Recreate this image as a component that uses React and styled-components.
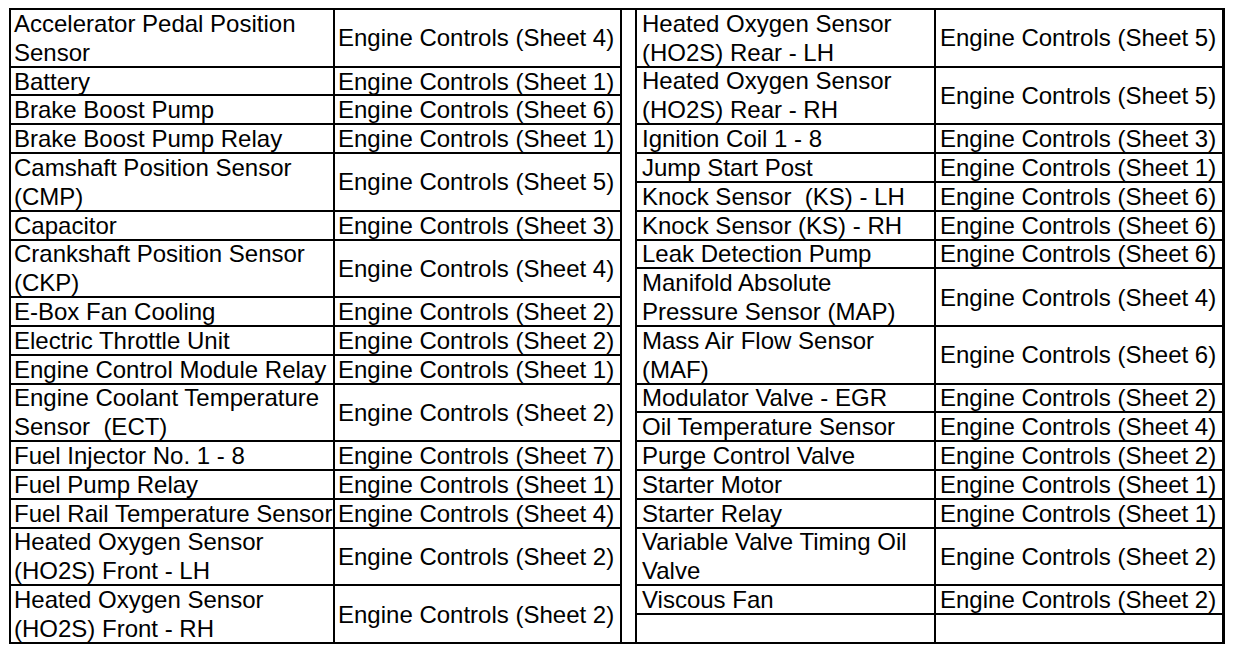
import React from 'react';
import styled, { createGlobalStyle } from 'styled-components';

const UNIT = 28.82;

const GlobalStyle = createGlobalStyle`
  html, body {
    margin: 0;
    padding: 0;
    background: #fff;
  }
  body {
    font-family: "Liberation Sans", Arial, sans-serif;
    color: #000;
  }
`;

const Frame = styled.div`
  display: flex;
  width: fit-content;
  margin: 8px 0 0 9px;
  border: 2px solid #000;
  border-right-width: 3px;
  background: #fff;
`;

const Side = styled.div`
  display: flex;
  flex-direction: column;
  border-left: ${(p) => (p.$right ? '2px solid #000' : 'none')};
  border-right: ${(p) => (p.$right ? 'none' : '2px solid #000')};
`;

const Spacer = styled.div`
  width: 13px;
`;

const Row = styled.div`
  display: grid;
  grid-template-columns: ${(p) => (p.$right ? '299px 286px' : '324px 285px')};
  grid-template-rows: minmax(0, 1fr);
  box-sizing: border-box;
  height: ${(p) => p.$units * UNIT}px;
  border-bottom: 2px solid #000;

  &:last-child {
    border-bottom: none;
    height: ${(p) => p.$units * UNIT - 2}px;
  }
`;

const Cell = styled.div`
  display: flex;
  flex-direction: column;
  justify-content: center;
  min-height: 0;
  box-sizing: border-box;
  padding-left: ${(p) => p.$pad}px;
  border-right: ${(p) => (p.$divider ? '2px solid #000' : 'none')};
  font-size: 24px;
  line-height: 29px;
  white-space: pre;
`;

const Line = styled.span`
  display: block;
  flex-shrink: 0;
`;

const left = [
  [['Accelerator Pedal Position', 'Sensor'], 4],
  [['Battery'], 1],
  [['Brake Boost Pump'], 6],
  [['Brake Boost Pump Relay'], 1],
  [['Camshaft Position Sensor', '(CMP)'], 5],
  [['Capacitor'], 3],
  [['Crankshaft Position Sensor', '(CKP)'], 4],
  [['E-Box Fan Cooling'], 2],
  [['Electric Throttle Unit'], 2],
  [['Engine Control Module Relay'], 1],
  [['Engine Coolant Temperature', 'Sensor  (ECT)'], 2],
  [['Fuel Injector No. 1 - 8'], 7],
  [['Fuel Pump Relay'], 1],
  [['Fuel Rail Temperature Sensor'], 4],
  [['Heated Oxygen Sensor', '(HO2S) Front - LH'], 2],
  [['Heated Oxygen Sensor', '(HO2S) Front - RH'], 2],
];

const right = [
  [['Heated Oxygen Sensor', '(HO2S) Rear - LH'], 5],
  [['Heated Oxygen Sensor', '(HO2S) Rear - RH'], 5],
  [['Ignition Coil 1 - 8'], 3],
  [['Jump Start Post'], 1],
  [['Knock Sensor  (KS) - LH'], 6],
  [['Knock Sensor (KS) - RH'], 6],
  [['Leak Detection Pump'], 6],
  [['Manifold Absolute', 'Pressure Sensor (MAP)'], 4],
  [['Mass Air Flow Sensor', '(MAF)'], 6],
  [['Modulator Valve - EGR'], 2],
  [['Oil Temperature Sensor'], 4],
  [['Purge Control Valve'], 2],
  [['Starter Motor'], 1],
  [['Starter Relay'], 1],
  [['Variable Valve Timing Oil', 'Valve'], 2],
  [['Viscous Fan'], 2],
  [[''], null],
];

const Table = ({ rows, isRight }) => (
  <Side $right={isRight}>
    {rows.map(([lines, sheet], i) => (
      <Row key={i} $right={isRight} $units={lines.length}>
        <Cell $divider $pad={isRight ? 5 : 3}>
          {lines.map((l, j) => (
            <Line key={j}>{l}</Line>
          ))}
        </Cell>
        <Cell $pad={isRight ? 4 : 3}>
          {sheet ? <Line>{`Engine Controls (Sheet ${sheet})`}</Line> : null}
        </Cell>
      </Row>
    ))}
  </Side>
);

const App = () => (
  <>
    <GlobalStyle />
    <Frame>
      <Table rows={left} />
      <Spacer />
      <Table rows={right} isRight />
    </Frame>
  </>
);

export default App;
